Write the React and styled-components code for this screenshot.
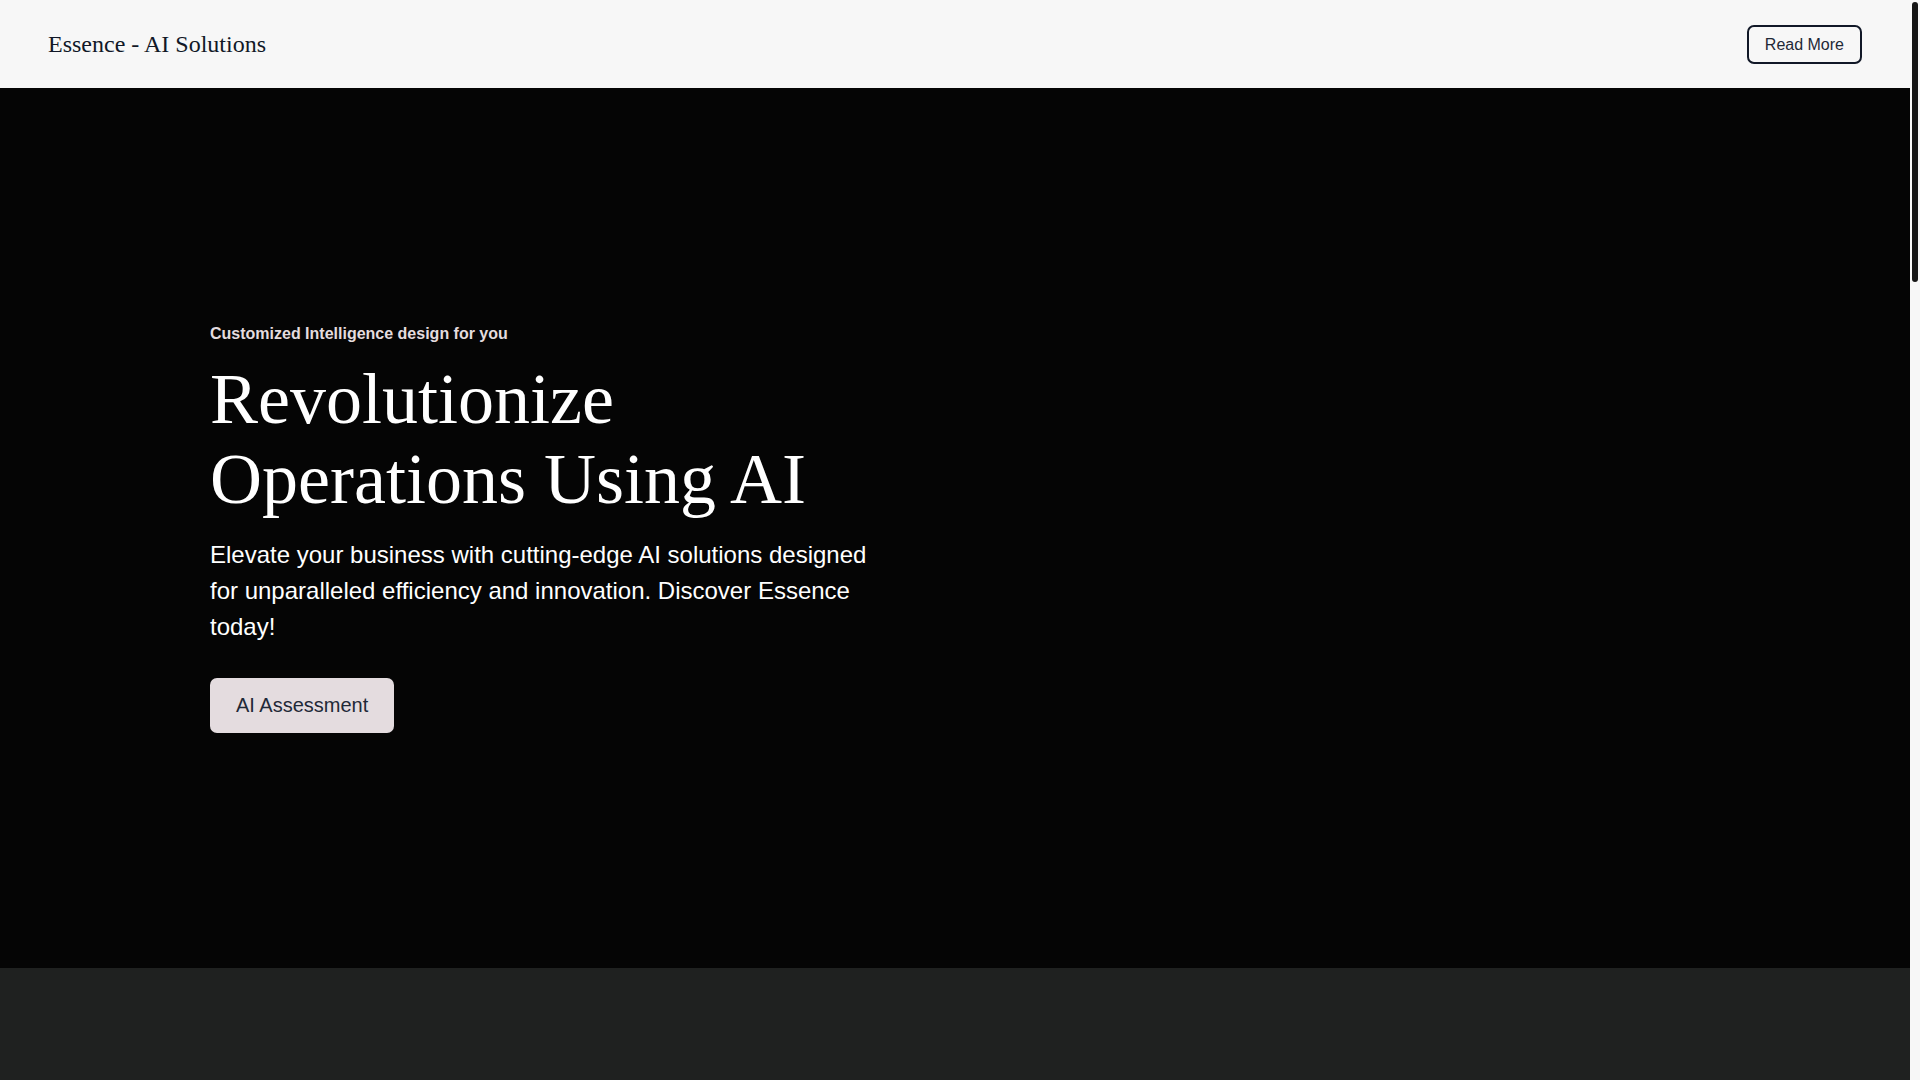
import React from "react"
import styled, { createGlobalStyle } from "styled-components"

const GlobalStyle = createGlobalStyle`
  html, body {
    margin: 0;
    padding: 0;
    height: 100%;
    overflow: hidden;
    background: #1f2120;
  }
  body {
    font-family: "Liberation Sans", Arial, sans-serif;
  }
`

const Shell = styled.div`
  display: flex;
  height: 100vh;
`

const Page = styled.div`
  flex: 1;
  min-width: 0;
  overflow-y: auto;
  scrollbar-width: none;
`

const ScrollTrack = styled.div`
  width: 10px;
  flex-shrink: 0;
  padding: 2px;
  box-sizing: border-box;
  background: #f7f7f7;
`

const ScrollThumb = styled.div`
  height: 280px;
  border-radius: 3px;
  background: #151515;
`

const Header = styled.header`
  height: 88px;
  padding: 0 48px;
  display: flex;
  align-items: center;
  justify-content: space-between;
  background-color: #f7f7f7;
  box-sizing: border-box;
`

const Logo = styled.div`
  font-family: "Liberation Serif", "Times New Roman", serif;
  font-size: 24px;
  color: #111827;
`

const OutlineButton = styled.button`
  font-family: "Liberation Sans", Arial, sans-serif;
  font-size: 16px;
  line-height: 19px;
  padding: 8px 16px;
  color: #1f2937;
  background: transparent;
  border: 2px solid #111827;
  border-radius: 7px;
  cursor: pointer;
`

const Hero = styled.section`
  height: 880px;
  background-color: #050505;
  display: flex;
  align-items: center;
`

const HeroInner = styled.div`
  width: 100%;
  max-width: 1490px;
  margin: 0 auto;
  display: grid;
  grid-template-columns: 672px 1fr;
`

const HeroText = styled.div`
  display: flex;
  flex-direction: column;
  align-items: flex-start;
`

const Eyebrow = styled.p`
  margin: 0 0 15px;
  font-size: 16px;
  line-height: 22px;
  font-weight: bold;
  color: #e4dcdf;
`

const Title = styled.h1`
  margin: 0 0 18px;
  font-family: "Liberation Serif", "Times New Roman", serif;
  font-weight: normal;
  font-size: 72px;
  line-height: 1.1;
  color: #ffffff;
`

const Lead = styled.p`
  margin: 0 0 33px;
  font-size: 24px;
  line-height: 36px;
  color: #ffffff;
`

const SolidButton = styled.button`
  font-family: "Liberation Sans", Arial, sans-serif;
  font-size: 20px;
  line-height: 23px;
  padding: 16px 26px;
  color: #1f2937;
  background-color: #e4dcdf;
  border: none;
  border-radius: 7px;
  cursor: pointer;
`

const Next = styled.section`
  height: 3190px;
  background-color: #1f2120;
`

const App = () => {
  return (
    <Shell>
      <GlobalStyle />
      <Page>
        <Header>
          <Logo>Essence - AI Solutions</Logo>
          <OutlineButton>Read More</OutlineButton>
        </Header>
        <Hero>
          <HeroInner>
            <HeroText>
              <Eyebrow>Customized Intelligence design for you</Eyebrow>
              <Title>Revolutionize Operations Using AI</Title>
              <Lead>
                Elevate your business with cutting-edge AI solutions designed for unparalleled
                efficiency and innovation. Discover Essence today!
              </Lead>
              <SolidButton>AI Assessment</SolidButton>
            </HeroText>
          </HeroInner>
        </Hero>
        <Next />
      </Page>
      <ScrollTrack>
        <ScrollThumb />
      </ScrollTrack>
    </Shell>
  )
}

export default App
